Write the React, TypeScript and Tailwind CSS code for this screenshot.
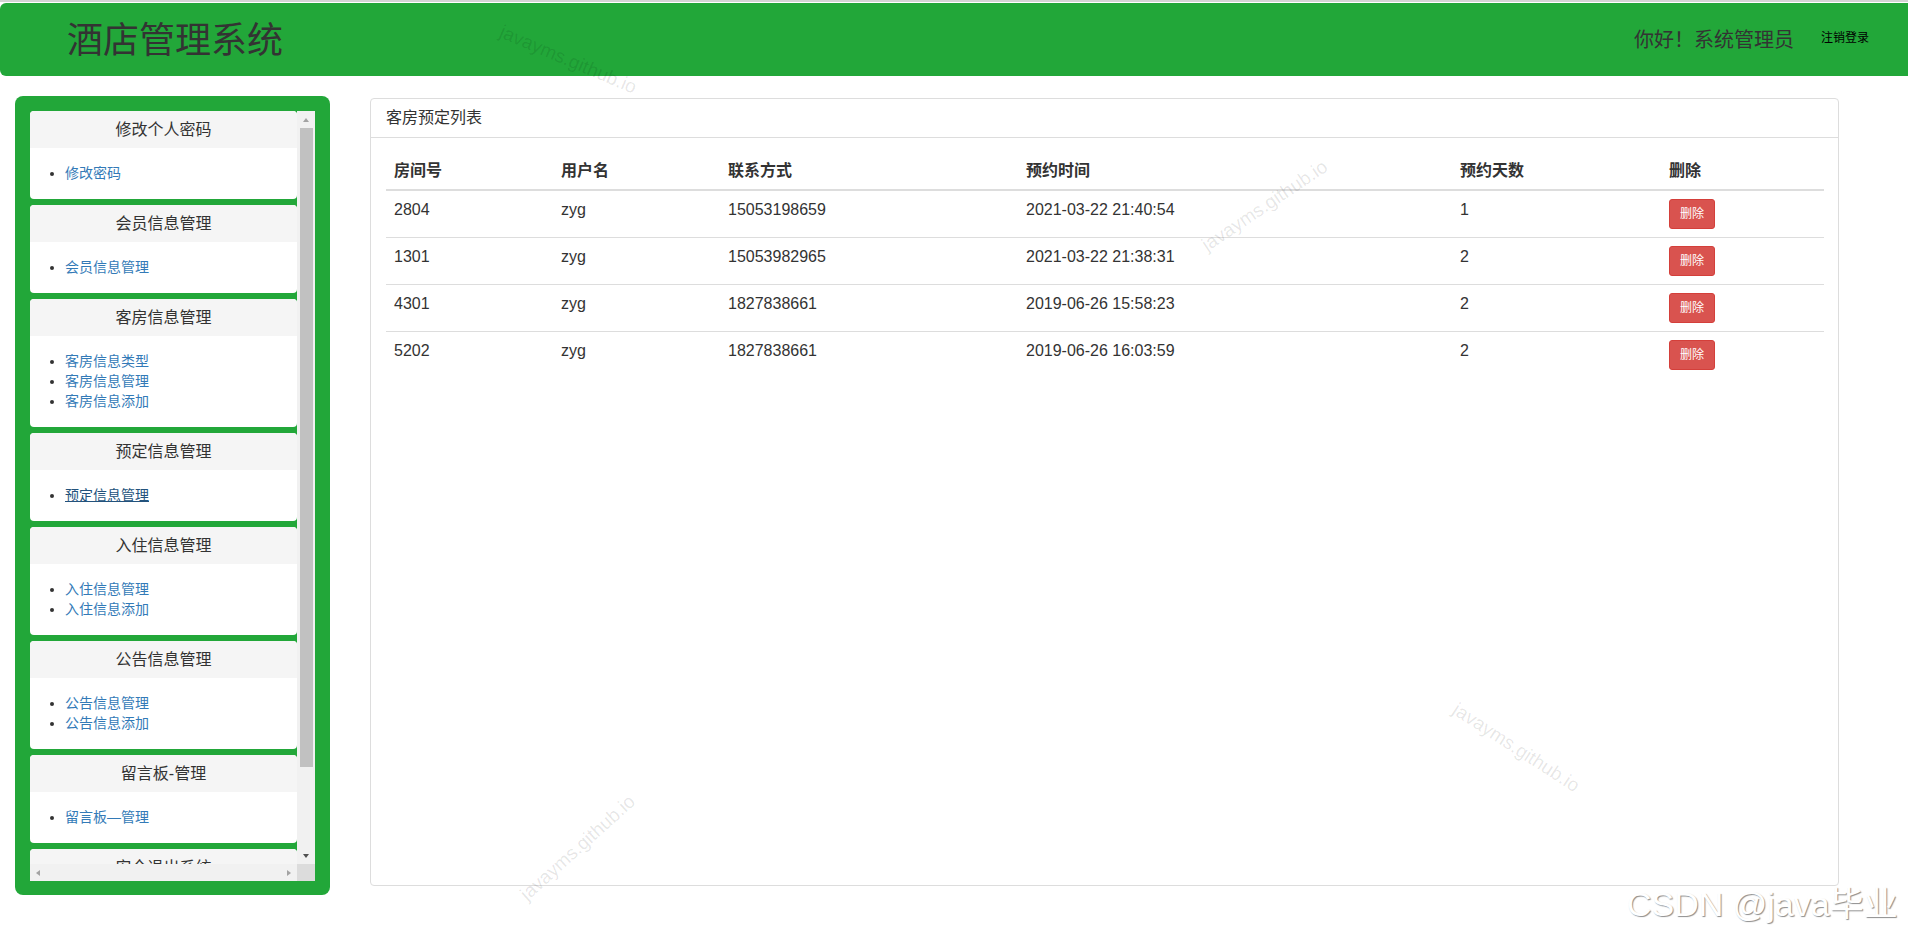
import React from 'react';

type MenuGroup = { title: string; items: string[]; active?: string };

const menu: MenuGroup[] = [
  { title: '修改个人密码', items: ['修改密码'] },
  { title: '会员信息管理', items: ['会员信息管理'] },
  { title: '客房信息管理', items: ['客房信息类型', '客房信息管理', '客房信息添加'] },
  { title: '预定信息管理', items: ['预定信息管理'], active: '预定信息管理' },
  { title: '入住信息管理', items: ['入住信息管理', '入住信息添加'] },
  { title: '公告信息管理', items: ['公告信息管理', '公告信息添加'] },
  { title: '留言板-管理', items: ['留言板—管理'] },
  { title: '安全退出系统', items: ['安全退出系统'] },
];

const bookings = [
  { room: '2804', user: 'zyg', phone: '15053198659', time: '2021-03-22 21:40:54', days: '1' },
  { room: '1301', user: 'zyg', phone: '15053982965', time: '2021-03-22 21:38:31', days: '2' },
  { room: '4301', user: 'zyg', phone: '1827838661', time: '2019-06-26 15:58:23', days: '2' },
  { room: '5202', user: 'zyg', phone: '1827838661', time: '2019-06-26 16:03:59', days: '2' },
];

function Tri({ dir, color }: { dir: 'up' | 'down' | 'left' | 'right'; color: string }) {
  const pts = {
    up: '1,6 4,2 7,6',
    down: '1,2 7,2 4,6',
    left: '6,1 6,7 2,4',
    right: '2,1 2,7 6,4',
  }[dir];
  return (
    <svg width="8" height="8" viewBox="0 0 8 8">
      <polygon points={pts} fill={color} />
    </svg>
  );
}

function Sidebar() {
  return (
    <aside className="w-[315px] h-[799px] bg-[#22a739] rounded-[8px] pl-[15px] pr-[15px] pt-[15px] pb-[14px] shrink-0">
      <div className="flex flex-col w-[285px] h-[770px]">
        <div className="flex h-[753px]">
          {/* menu panels, last one runs under the scrollbar */}
          <div className="w-[267px] overflow-hidden flex flex-col gap-[6px]">
            {menu.map((g) => (
              <div key={g.title} className="bg-white rounded-[4px] overflow-hidden shrink-0">
                <div className="h-[37px] bg-[#f5f5f5] text-center text-[16px] leading-[37px] text-[#333]">
                  {g.title}
                </div>
                <ul className="pt-[15px] pb-[16px] pl-[35px] pr-[15px] list-disc text-[14px] leading-[20px] text-[#333]">
                  {g.items.map((it) => (
                    <li key={it}>
                      <a className={g.active === it ? 'text-[#23527c] underline' : 'text-[#337ab7]'}>{it}</a>
                    </li>
                  ))}
                </ul>
              </div>
            ))}
          </div>
          {/* vertical scrollbar */}
          <div className="w-[18px] bg-[#f1f1f1] flex flex-col items-center">
            <div className="h-[17px] flex items-center justify-center">
              <Tri dir="up" color="#a3a3a3" />
            </div>
            <div className="w-[13px] h-[639px] bg-[#c1c1c1]" />
            <div className="flex-1" />
            <div className="h-[17px] flex items-center justify-center">
              <Tri dir="down" color="#505050" />
            </div>
          </div>
        </div>
        {/* horizontal scrollbar */}
        <div className="flex h-[17px]">
          <div className="w-[267px] bg-[#f1f1f1] flex items-center justify-between px-[4px]">
            <Tri dir="left" color="#a3a3a3" />
            <Tri dir="right" color="#a3a3a3" />
          </div>
          <div className="w-[18px] bg-[#dcdcdc]" />
        </div>
      </div>
    </aside>
  );
}

function BookingPanel() {
  return (
    <section className="ml-[40px] mt-[2px] w-[1469px] h-[788px] border border-[#ddd] rounded-[4px] bg-white">
      <div className="h-[39px] border-b border-[#ddd] px-[15px] flex items-center text-[16px] text-[#333]">
        客房预定列表
      </div>
      <div className="p-[15px]">
        <table className="w-[1438px] table-fixed border-collapse text-[16px] leading-[20px] text-[#333]">
          <colgroup>
            <col className="w-[167px]" />
            <col className="w-[167px]" />
            <col className="w-[298px]" />
            <col className="w-[434px]" />
            <col className="w-[209px]" />
            <col className="w-[163px]" />
          </colgroup>
          <thead>
            <tr className="border-b-2 border-[#ddd]">
              {['房间号', '用户名', '联系方式', '预约时间', '预约天数', '删除'].map((h) => (
                <th key={h} className="p-[8px] text-left font-bold">
                  {h}
                </th>
              ))}
            </tr>
          </thead>
          <tbody>
            {bookings.map((b, i) => (
              <tr key={b.room + b.time} className={i > 0 ? 'border-t border-[#ddd]' : ''}>
                <td className="pt-[9px] px-[8px] pb-[8px] align-top">{b.room}</td>
                <td className="pt-[9px] px-[8px] pb-[8px] align-top">{b.user}</td>
                <td className="pt-[9px] px-[8px] pb-[8px] align-top">{b.phone}</td>
                <td className="pt-[9px] px-[8px] pb-[8px] align-top">{b.time}</td>
                <td className="pt-[9px] px-[8px] pb-[8px] align-top">{b.days}</td>
                <td className="pt-[8px] px-[8px] pb-[8px] align-top">
                  <button className="h-[30px] px-[10px] bg-[#d9534f] border border-[#d43f3a] rounded-[3px] text-white text-[12px] leading-[18px]">
                    删除
                  </button>
                </td>
              </tr>
            ))}
          </tbody>
        </table>
      </div>
    </section>
  );
}

export default function App() {
  const mark = 'absolute text-[19px] text-black/10 whitespace-nowrap -translate-x-1/2 -translate-y-1/2 pointer-events-none';
  return (
    <div className="relative w-[1908px] h-[935px] overflow-hidden bg-white text-[#333] font-['Liberation_Sans','Noto_Sans_CJK_SC',sans-serif]">
      <div className="h-[3px] border-t-2 border-[#d4d4d4]" />
      <header className="h-[73px] bg-[#22a739] rounded-l-[6px] flex items-center pl-[67px] pr-[39px]">
        <h1 className="text-[36px] leading-none text-[#333] mt-[2px]">酒店管理系统</h1>
        <div className="ml-auto flex items-center">
          <span className="text-[20px] leading-none text-[#333]">你好！系统管理员</span>
          <a className="ml-[27px] text-[12px] leading-none text-black -mt-[3px]">注销登录</a>
        </div>
      </header>

      <main className="flex items-start mt-[20px] pl-[15px]">
        <Sidebar />
        <BookingPanel />
      </main>

      {/* screenshot watermarks */}
      <span className={`${mark} left-[568px] top-[60px] rotate-[23deg]`}>javayms.github.io</span>
      <span className={`${mark} left-[1265px] top-[206px] -rotate-[34deg]`}>javayms.github.io</span>
      <span className={`${mark} left-[1516px] top-[748px] rotate-[33deg]`}>javayms.github.io</span>
      <span className={`${mark} left-[578px] top-[848px] -rotate-[42deg]`}>javayms.github.io</span>
      <span className="absolute left-[1627px] top-[884px] text-[34px] leading-[40px] text-white whitespace-nowrap [text-shadow:1px_1px_1px_rgba(0,0,0,0.45)]">
        CSDN @java毕业
      </span>
    </div>
  );
}
